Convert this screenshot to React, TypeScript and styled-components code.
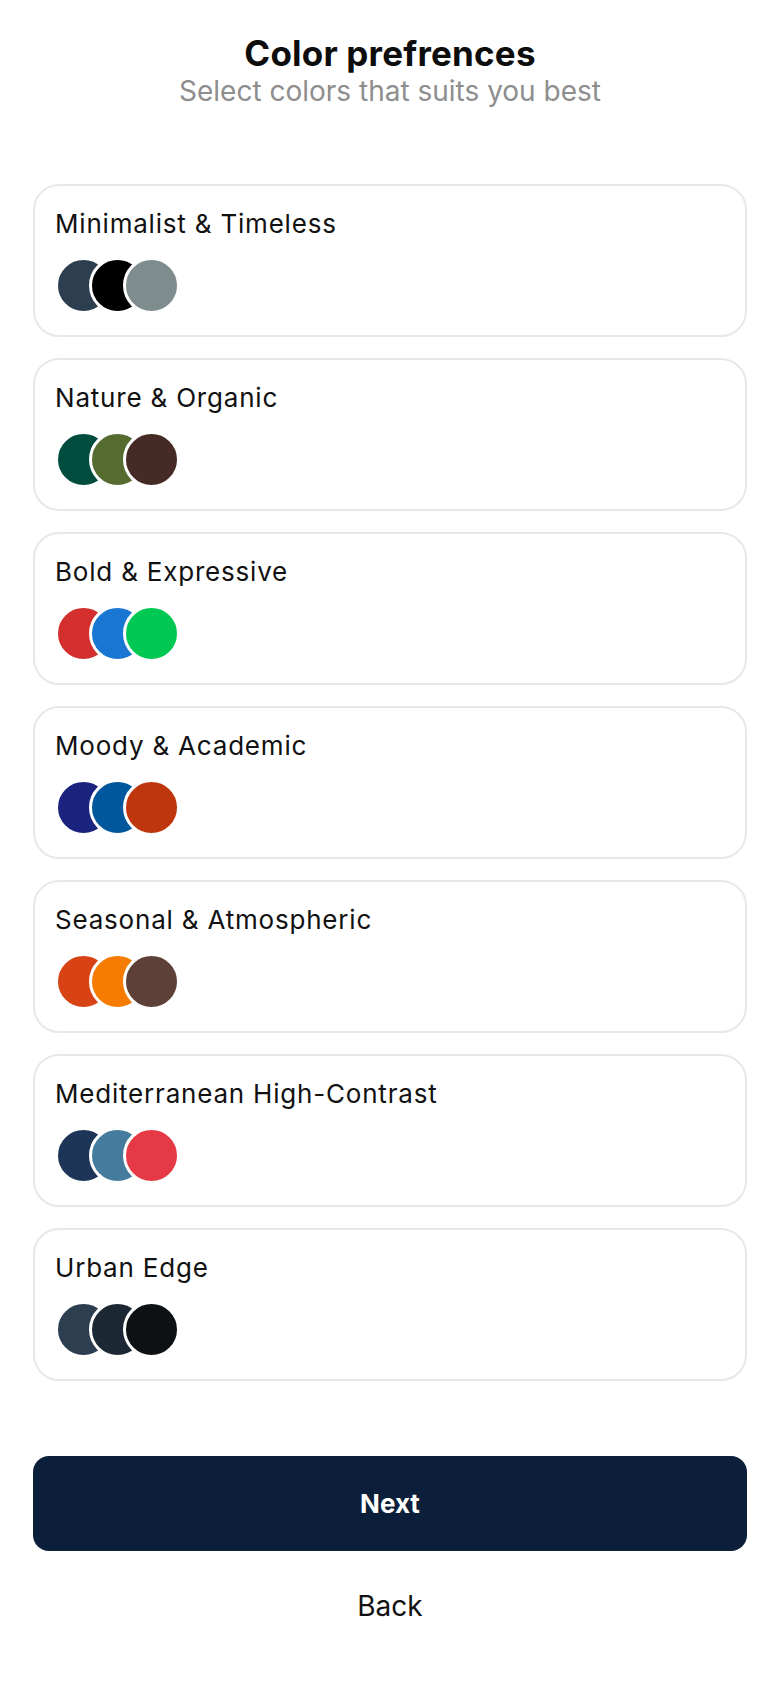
import React from "react";
import styled, { createGlobalStyle } from "styled-components";

interface Palette {
  name: string;
  colors: string[];
}

const PALETTES: Palette[] = [
  { name: "Minimalist & Timeless", colors: ["#2c3e50", "#000000", "#7f8c8d"] },
  { name: "Nature & Organic", colors: ["#004d40", "#556b2f", "#452a25"] },
  { name: "Bold & Expressive", colors: ["#d32f2f", "#1976d2", "#00c853"] },
  { name: "Moody & Academic", colors: ["#1a237e", "#01579b", "#bf360c"] },
  { name: "Seasonal & Atmospheric", colors: ["#d84315", "#f57c00", "#5d4037"] },
  { name: "Mediterranean High-Contrast", colors: ["#1d3557", "#457b9d", "#e63946"] },
  { name: "Urban Edge", colors: ["#2c3e50", "#1c2833", "#0e1114"] },
];

const GlobalStyle = createGlobalStyle`
  * {
    box-sizing: border-box;
  }
  body {
    margin: 0;
    background: #ffffff;
    font-family: Inter, "Noto Sans", sans-serif;
    color: #111111;
  }
`;

const Page = styled.div`
  display: flex;
  flex-direction: column;
  padding: 32px 33px 40px;
`;

const Header = styled.header`
  text-align: center;
`;

const Title = styled.h1`
  margin: 0;
  font-size: 35px;
  line-height: 42px;
  font-weight: 700;
  letter-spacing: 0.2px;
  color: #0d0d0d;
`;

const Subtitle = styled.p`
  margin: 0;
  font-size: 28px;
  line-height: 34px;
  font-weight: 400;
  color: #8e8e8e;
`;

const List = styled.div`
  display: flex;
  flex-direction: column;
  gap: 21px;
  margin-top: 76px;
`;

const Card = styled.button`
  display: flex;
  flex-direction: column;
  align-items: flex-start;
  gap: 18px;
  width: 100%;
  padding: 23px 20px 21px;
  background: #ffffff;
  border: 2px solid #e8e8e8;
  border-radius: 26px;
  font-family: inherit;
  text-align: left;
  cursor: pointer;
`;

const CardTitle = styled.span`
  font-size: 26px;
  line-height: 30px;
  letter-spacing: 0.8px;
  color: #111111;
`;

const Swatches = styled.div`
  display: flex;
`;

const Swatch = styled.span<{ $color: string }>`
  width: 57px;
  height: 57px;
  border-radius: 50%;
  border: 3px solid #ffffff;
  background: ${(p) => p.$color};

  & + & {
    margin-left: -23px;
  }
`;

const NextButton = styled.button`
  margin-top: 75px;
  height: 95px;
  width: 100%;
  border: none;
  border-radius: 16px;
  background: #0b1f3a;
  color: #ffffff;
  font-family: inherit;
  font-size: 26px;
  font-weight: 700;
  cursor: pointer;
`;

const BackButton = styled.button`
  margin-top: 39px;
  align-self: center;
  background: none;
  border: none;
  padding: 0;
  font-family: inherit;
  font-size: 28px;
  line-height: 32px;
  color: #111111;
  cursor: pointer;
`;

export default function App() {
  return (
    <>
      <GlobalStyle />
      <Page>
        <Header>
          <Title>Color prefrences</Title>
          <Subtitle>Select colors that suits you best</Subtitle>
        </Header>
        <List>
          {PALETTES.map((p) => (
            <Card key={p.name}>
              <CardTitle>{p.name}</CardTitle>
              <Swatches>
                {p.colors.map((c, i) => (
                  <Swatch key={i} $color={c} />
                ))}
              </Swatches>
            </Card>
          ))}
        </List>
        <NextButton>Next</NextButton>
        <BackButton>Back</BackButton>
      </Page>
    </>
  );
}
